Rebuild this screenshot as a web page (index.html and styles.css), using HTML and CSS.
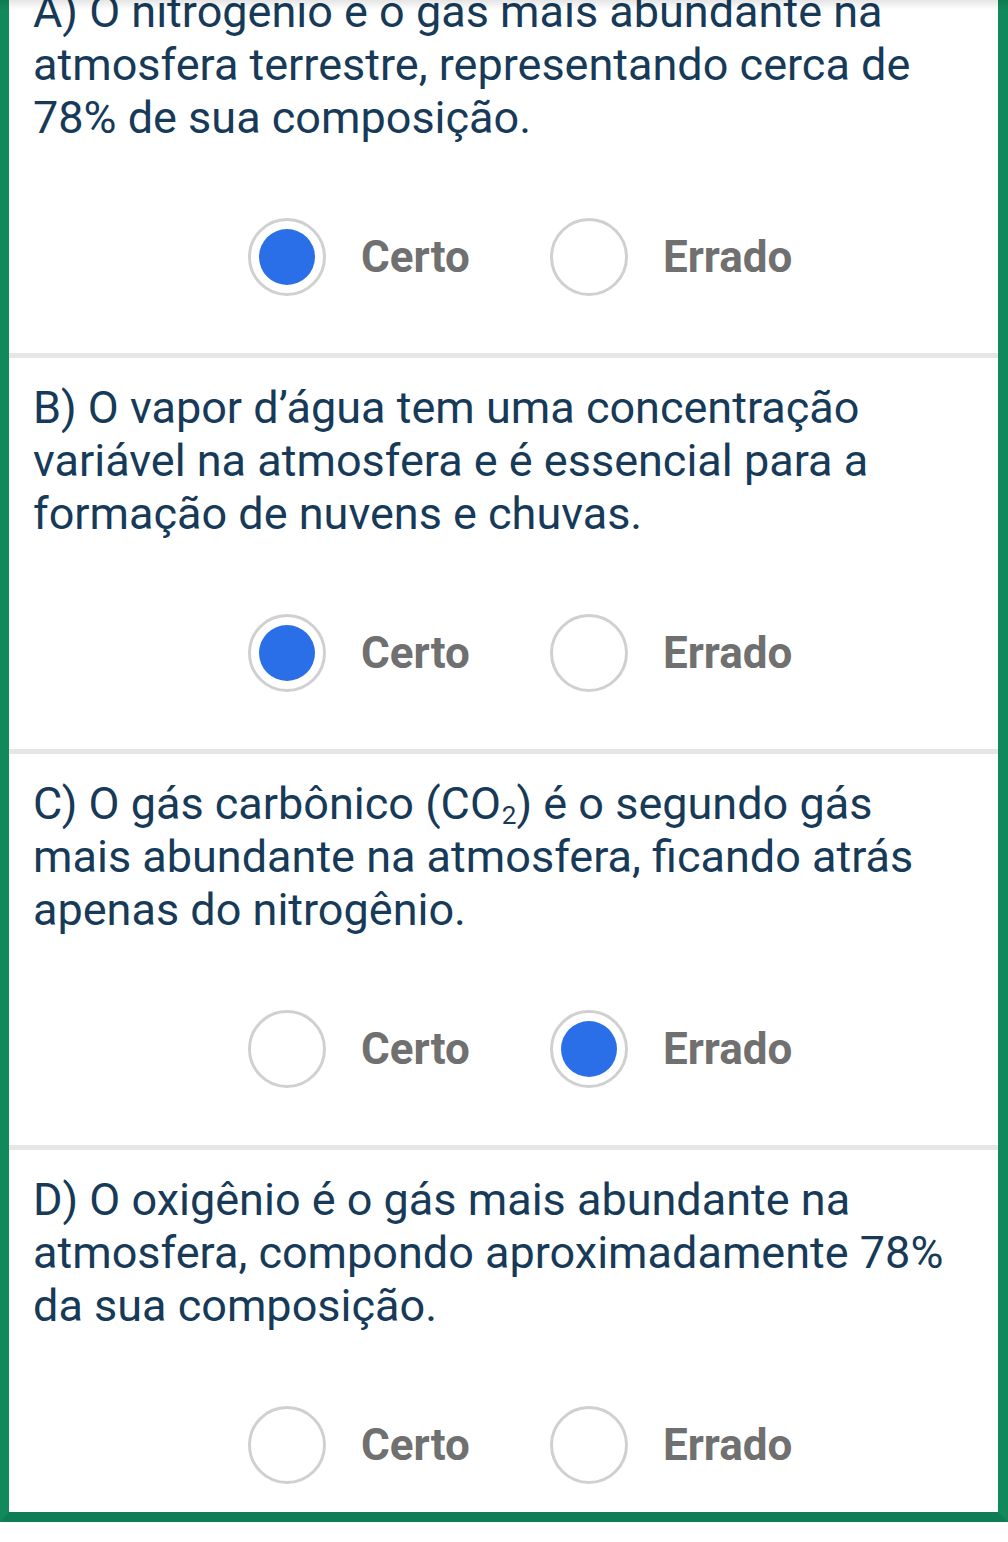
FILE: index.html
```html
<!DOCTYPE html>
<html>
  <head>
    <title>Atmosfera - Certo ou Errado</title>
    <link rel="stylesheet" href="styles.css">
  </head>
  <body>
    <div class="top-shadow"></div>
    <div class="quiz-card">
      <div class="question">
        <p class="statement">A) O nitrogênio é o gás mais abundante na atmosfera terrestre, representando cerca de 78% de sua composição.</p>
        <div class="choices">
          <label class="choice"><span class="radio checked"></span><span class="choice-text">Certo</span></label>
          <label class="choice"><span class="radio"></span><span class="choice-text">Errado</span></label>
        </div>
      </div>

      <div class="question">
        <p class="statement">B) O vapor d’água tem uma concentração variável na atmosfera e é essencial para a formação de nuvens e chuvas.</p>
        <div class="choices">
          <label class="choice"><span class="radio checked"></span><span class="choice-text">Certo</span></label>
          <label class="choice"><span class="radio"></span><span class="choice-text">Errado</span></label>
        </div>
      </div>

      <div class="question">
        <p class="statement">C) O gás carbônico (CO<sub>2</sub>) é o segundo gás mais abundante na atmosfera, ficando atrás apenas do nitrogênio.</p>
        <div class="choices">
          <label class="choice"><span class="radio"></span><span class="choice-text">Certo</span></label>
          <label class="choice"><span class="radio checked"></span><span class="choice-text">Errado</span></label>
        </div>
      </div>

      <div class="question">
        <p class="statement">D) O oxigênio é o gás mais abundante na atmosfera, compondo aproximadamente 78% da sua composição.</p>
        <div class="choices">
          <label class="choice"><span class="radio"></span><span class="choice-text">Certo</span></label>
          <label class="choice"><span class="radio"></span><span class="choice-text">Errado</span></label>
        </div>
      </div>
    </div>
  </body>
</html>
```

FILE: styles.css
```css
body {
  margin: 0;
  background: #fff;
  font-family: Roboto, "Liberation Sans", sans-serif;
}

.top-shadow {
  position: fixed;
  top: 0;
  left: 0;
  right: 0;
  height: 10px;
  background: linear-gradient(rgba(0, 0, 0, 0.10), rgba(0, 0, 0, 0));
  z-index: 2;
}

.quiz-card {
  margin-top: -38px;
  border-left: 9px solid #11895b;
  border-right: 10px solid #11895b;
  border-bottom: 10px solid #0e7d55;
  background: #fff;
}

.question {
  padding: 23px 0 57px 24px;
  border-top: 5px solid #e6e6e6;
}

.question:first-child {
  border-top: none;
}

.question:last-child {
  padding-bottom: 28px;
}

.statement {
  margin: 0;
  padding-right: 40px;
  color: #163a58;
  font-size: 45px;
  line-height: 53px;
}

.statement sub {
  font-size: 58%;
  line-height: 1;
  vertical-align: -0.18em;
  margin-left: 1px;
}

.choices {
  display: flex;
  margin-top: 74px;
  padding-left: 215px;
}

.choice {
  display: flex;
  align-items: center;
  gap: 35px;
  width: 302px;
}

.radio {
  box-sizing: border-box;
  width: 78px;
  height: 78px;
  border: 3px solid #d0d0d0;
  border-radius: 50%;
  display: flex;
  align-items: center;
  justify-content: center;
}

.radio.checked::after {
  content: "";
  width: 56px;
  height: 56px;
  border-radius: 50%;
  background: #2a6ee8;
}

.choice-text {
  color: #707070;
  font-size: 44px;
  font-weight: bold;
}
```
